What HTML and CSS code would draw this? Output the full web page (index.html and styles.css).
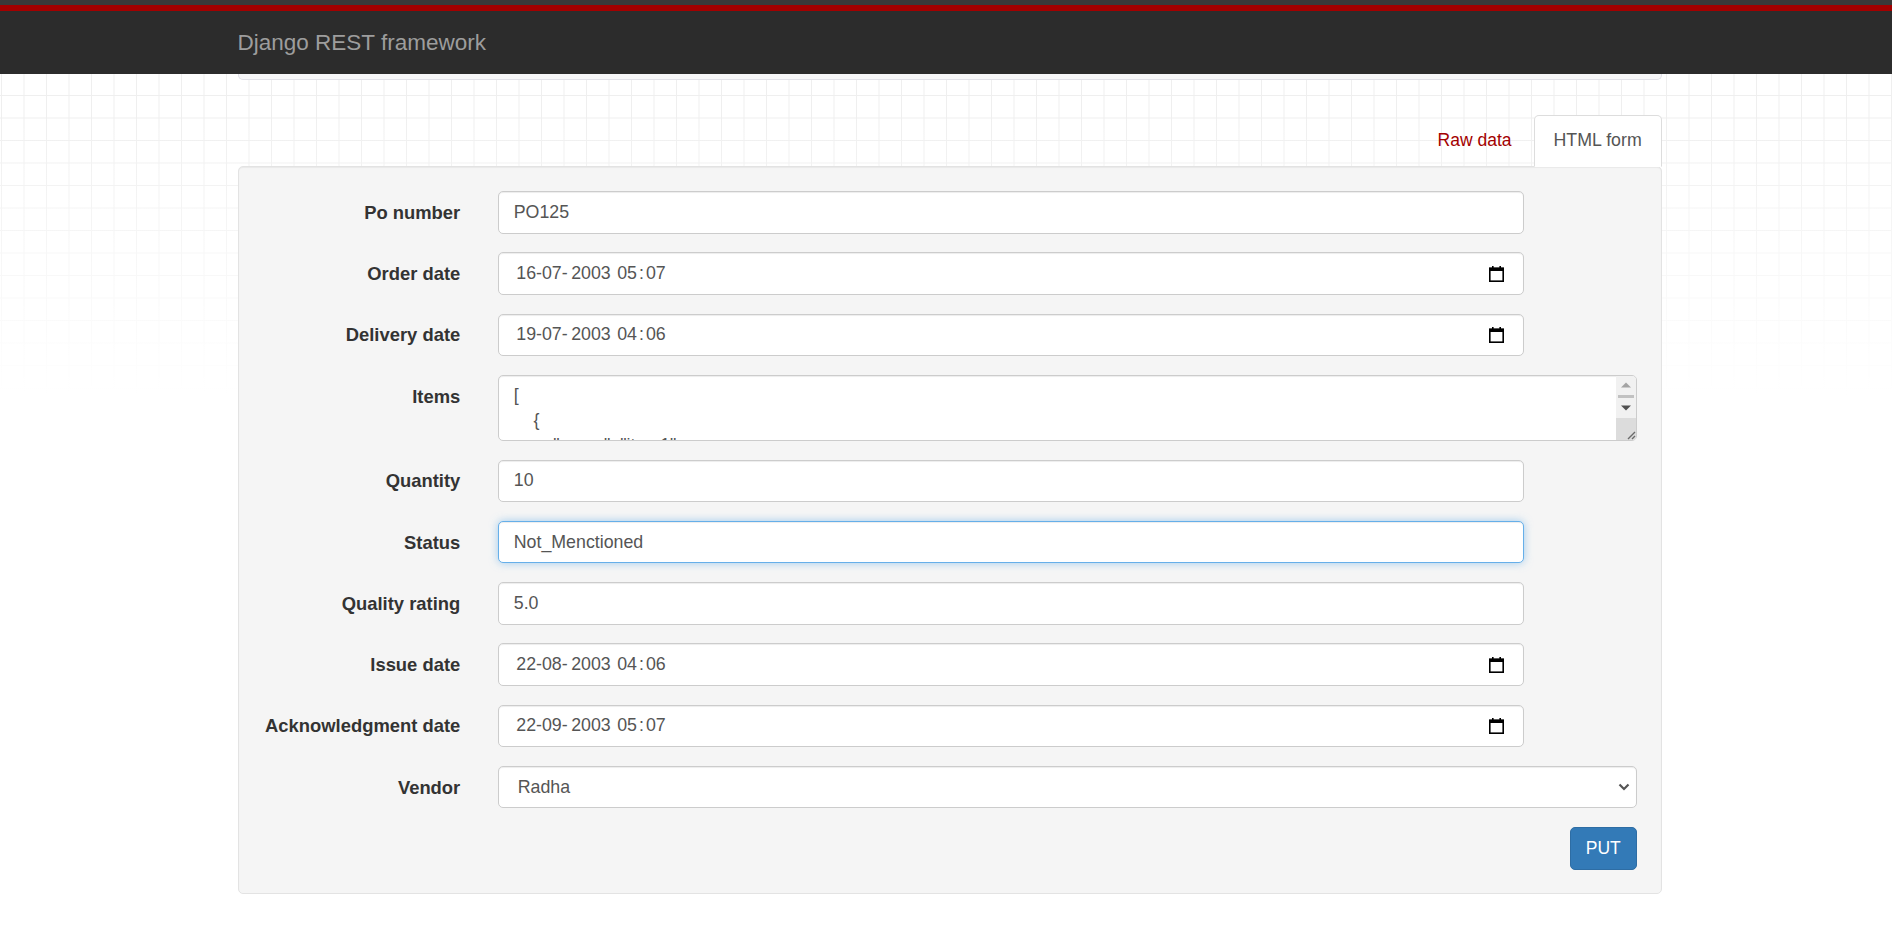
FILE: index.html
```html
<!DOCTYPE html>
<html lang="en">
<head>
<meta charset="utf-8">
<title>Django REST framework</title>
<link rel="stylesheet" href="styles.css">
</head>
<body>
<div class="topstrip"></div>
<nav class="navbar">
  <div class="container">
    <span class="brand">Django REST framework</span>
  </div>
</nav>

<main class="container">
  <div class="prev-panel"></div>

  <div class="tabs">
    <a class="tab">Raw data</a>
    <a class="tab active">HTML form</a>
  </div>

  <div class="well">
    <form class="form">
      <div class="form-group">
        <label class="control-label">Po number</label>
        <div class="field"><input class="form-control short" type="text" value="PO125"></div>
      </div>

      <div class="form-group">
        <label class="control-label">Order date</label>
        <div class="field">
          <div class="form-control short date-box">
            <span class="date-text">16-07-<span class="yr">2003</span><span class="tm">05<span class="colon">:</span>07</span></span>
            <svg class="cal" width="15" height="16" viewBox="0 0 15 16"><rect x="3" y="0" width="1.6" height="3" fill="#000"/><rect x="10.4" y="0" width="1.6" height="3" fill="#000"/><rect x="0" y="1.6" width="15" height="3.4" fill="#000"/><rect x="0.8" y="2.4" width="13.4" height="12.8" fill="none" stroke="#000" stroke-width="1.6"/></svg>
          </div>
        </div>
      </div>

      <div class="form-group">
        <label class="control-label">Delivery date</label>
        <div class="field">
          <div class="form-control short date-box">
            <span class="date-text">19-07-<span class="yr">2003</span><span class="tm">04<span class="colon">:</span>06</span></span>
            <svg class="cal" width="15" height="16" viewBox="0 0 15 16"><rect x="3" y="0" width="1.6" height="3" fill="#000"/><rect x="10.4" y="0" width="1.6" height="3" fill="#000"/><rect x="0" y="1.6" width="15" height="3.4" fill="#000"/><rect x="0.8" y="2.4" width="13.4" height="12.8" fill="none" stroke="#000" stroke-width="1.6"/></svg>
          </div>
        </div>
      </div>

      <div class="form-group">
        <label class="control-label">Items</label>
        <div class="field">
          <div class="form-control textarea-box">
            <textarea class="textarea">[
    {
        "name": "item1",
        "price": 100
    }
]</textarea>
            <div class="sb">
              <div class="sb-btn"><svg width="10" height="6" viewBox="0 0 10 6"><path d="M0 5.5 L5 0.5 L10 5.5 Z" fill="#a3a3a3"/></svg></div>
              <div class="sb-track"><div class="sb-thumb"></div></div>
              <div class="sb-btn"><svg width="10" height="6" viewBox="0 0 10 6"><path d="M0 0.5 L5 5.5 L10 0.5 Z" fill="#505050"/></svg></div>
              <div class="sb-corner"><svg width="12" height="12" viewBox="0 0 12 12"><path d="M11 4 L4 11 M11 8 L8 11" stroke="#6a6a6a" stroke-width="1.4" fill="none"/></svg></div>
            </div>
          </div>
        </div>
      </div>

      <div class="form-group">
        <label class="control-label">Quantity</label>
        <div class="field"><input class="form-control short" type="text" value="10"></div>
      </div>

      <div class="form-group">
        <label class="control-label">Status</label>
        <div class="field"><input class="form-control short focused" type="text" value="Not_Menctioned"></div>
      </div>

      <div class="form-group">
        <label class="control-label">Quality rating</label>
        <div class="field"><input class="form-control short" type="text" value="5.0"></div>
      </div>

      <div class="form-group">
        <label class="control-label">Issue date</label>
        <div class="field">
          <div class="form-control short date-box">
            <span class="date-text">22-08-<span class="yr">2003</span><span class="tm">04<span class="colon">:</span>06</span></span>
            <svg class="cal" width="15" height="16" viewBox="0 0 15 16"><rect x="3" y="0" width="1.6" height="3" fill="#000"/><rect x="10.4" y="0" width="1.6" height="3" fill="#000"/><rect x="0" y="1.6" width="15" height="3.4" fill="#000"/><rect x="0.8" y="2.4" width="13.4" height="12.8" fill="none" stroke="#000" stroke-width="1.6"/></svg>
          </div>
        </div>
      </div>

      <div class="form-group">
        <label class="control-label">Acknowledgment date</label>
        <div class="field">
          <div class="form-control short date-box">
            <span class="date-text">22-09-<span class="yr">2003</span><span class="tm">05<span class="colon">:</span>07</span></span>
            <svg class="cal" width="15" height="16" viewBox="0 0 15 16"><rect x="3" y="0" width="1.6" height="3" fill="#000"/><rect x="10.4" y="0" width="1.6" height="3" fill="#000"/><rect x="0" y="1.6" width="15" height="3.4" fill="#000"/><rect x="0.8" y="2.4" width="13.4" height="12.8" fill="none" stroke="#000" stroke-width="1.6"/></svg>
          </div>
        </div>
      </div>

      <div class="form-group">
        <label class="control-label">Vendor</label>
        <div class="field">
          <div class="form-control select-box">
            <select class="select"><option>Radha</option></select>
            <svg class="chev" width="12" height="8" viewBox="0 0 12 8"><path d="M1.5 1.5 L6 6 L10.5 1.5" fill="none" stroke="#555" stroke-width="2.2"/></svg>
          </div>
        </div>
      </div>

      <div class="form-actions">
        <button class="btn-primary" type="button">PUT</button>
      </div>
    </form>
  </div>
</main>
</body>
</html>
```

FILE: styles.css
```css
html {
  min-height: 100%;
}

body {
  margin: 0;
  font-family: "Liberation Sans", Arial, Helvetica, sans-serif;
  font-size: 17.5px;
  line-height: 25px;
  color: #333;
  background-color: #fff;
  background-image:
    linear-gradient(to bottom, rgba(255,255,255,0) 110px, #fff 395px),
    linear-gradient(to right, #efefef 1px, transparent 1px),
    linear-gradient(to bottom, #efefef 1px, transparent 1px);
  background-size: 100% 100%, 22.5px 22.5px, 22.5px 22.5px;
  background-position: 0 0, 1px 5px, 1px 5px;
  background-repeat: no-repeat, repeat, repeat;
}

.topstrip {
  height: 5px;
  background: #3a3a3a;
}

.navbar {
  height: 63px;
  background: #2c2c2c;
  border-top: 6px solid #a30000;
}

.container {
  width: 1424px;
  margin: 0 auto;
  padding-left: 7px;
}

.brand {
  display: block;
  font-size: 22.5px;
  line-height: 63px;
  color: #9d9d9d;
}

.prev-panel {
  height: 5px;
  background: #f7f7f9;
  border: 1px solid #e1e1e8;
  border-top: 0;
  border-radius: 0 0 5px 5px;
}

.tabs {
  display: flex;
  justify-content: flex-end;
  margin-top: 35px;
  margin-bottom: -1px;
}

.tab {
  position: relative;
  padding: 12.25px 18.75px;
  line-height: 25px;
  border: 1px solid transparent;
  border-radius: 5px 5px 0 0;
  color: #a30000;
  margin-right: 2.5px;
}

.tab.active {
  margin-right: 0;
  color: #555;
  font-size: 17.8px;
  background: #fff;
  border-color: #ddd;
  border-bottom-color: transparent;
}

.well {
  background: #f5f5f5;
  border: 1px solid #e3e3e3;
  border-radius: 5px;
  padding: 24.5px 23.75px 23px;
  box-shadow: inset 0 1px 1px rgba(0,0,0,0.05);
}

.form-group {
  display: flex;
  gap: 37.5px;
  margin-bottom: 18.75px;
}

.control-label {
  flex: none;
  width: 198px;
  box-sizing: border-box;
  padding-top: 8.75px;
  text-align: right;
  font-weight: 700;
  font-size: 18.4px;
  color: #333;
  white-space: nowrap;
}

.field {
  flex: 1;
  min-width: 0;
}

.form-control {
  display: block;
  box-sizing: border-box;
  width: 100%;
  height: 42.5px;
  padding: 7.5px 15px;
  font-family: inherit;
  font-size: 17.8px;
  line-height: 25px;
  color: #555;
  background: #fff;
  border: 1px solid #ccc;
  border-radius: 5px;
  box-shadow: inset 0 1px 1px rgba(0,0,0,0.075);
  outline: none;
}

.form-control.short {
  width: 1026px;
}

.form-control.focused {
  border-color: #66afe9;
  box-shadow: inset 0 1px 1px rgba(0,0,0,0.075), 0 0 8px rgba(102,175,233,0.6);
}

.date-box {
  display: flex;
  align-items: center;
  justify-content: space-between;
  padding: 0 18.5px 0 17.5px;
}

.date-text {
  white-space: pre;
}

.yr {
  margin-left: 3.5px;
}

.tm {
  margin-left: 6.5px;
}

.colon {
  margin: 0 2px;
}

.cal {
  flex: none;
}

.textarea-box {
  display: flex;
  height: 66px;
  padding: 0;
  overflow: hidden;
}

.textarea {
  flex: 1;
  min-width: 0;
  border: 0;
  margin: 0;
  padding: 7.5px 15px;
  resize: none;
  overflow: hidden;
  font-family: inherit;
  font-size: 17.8px;
  line-height: 25px;
  color: #555;
  background: transparent;
  outline: none;
}

.sb {
  flex: none;
  width: 20px;
  display: flex;
  flex-direction: column;
  background: #f1f1f1;
}

.sb-btn {
  height: 19px;
  display: flex;
  align-items: center;
  justify-content: center;
}

.sb-track {
  height: 4px;
  display: flex;
  align-items: center;
  padding: 0 2px;
}

.sb-thumb {
  flex: 1;
  height: 3px;
  background: #c1c1c1;
}

.sb-corner {
  flex: 1;
  background: #dcdcdc;
  display: flex;
  align-items: flex-end;
  justify-content: flex-end;
}

.select-box {
  display: flex;
  align-items: center;
  padding: 0 6px 0 0;
}

.select {
  flex: 1;
  height: 100%;
  border: 0;
  margin: 0;
  padding: 0 0 0 19px;
  background: transparent;
  appearance: none;
  -webkit-appearance: none;
  font-family: inherit;
  font-size: 17.8px;
  color: #555;
  outline: none;
}

.chev {
  flex: none;
}

.form-actions {
  display: flex;
  justify-content: flex-end;
}

.btn-primary {
  height: 42.5px;
  padding: 0 15px;
  font-family: inherit;
  font-size: 17.5px;
  color: #fff;
  background: #337ab7;
  border: 1px solid #2e6da4;
  border-radius: 5px;
}
```
